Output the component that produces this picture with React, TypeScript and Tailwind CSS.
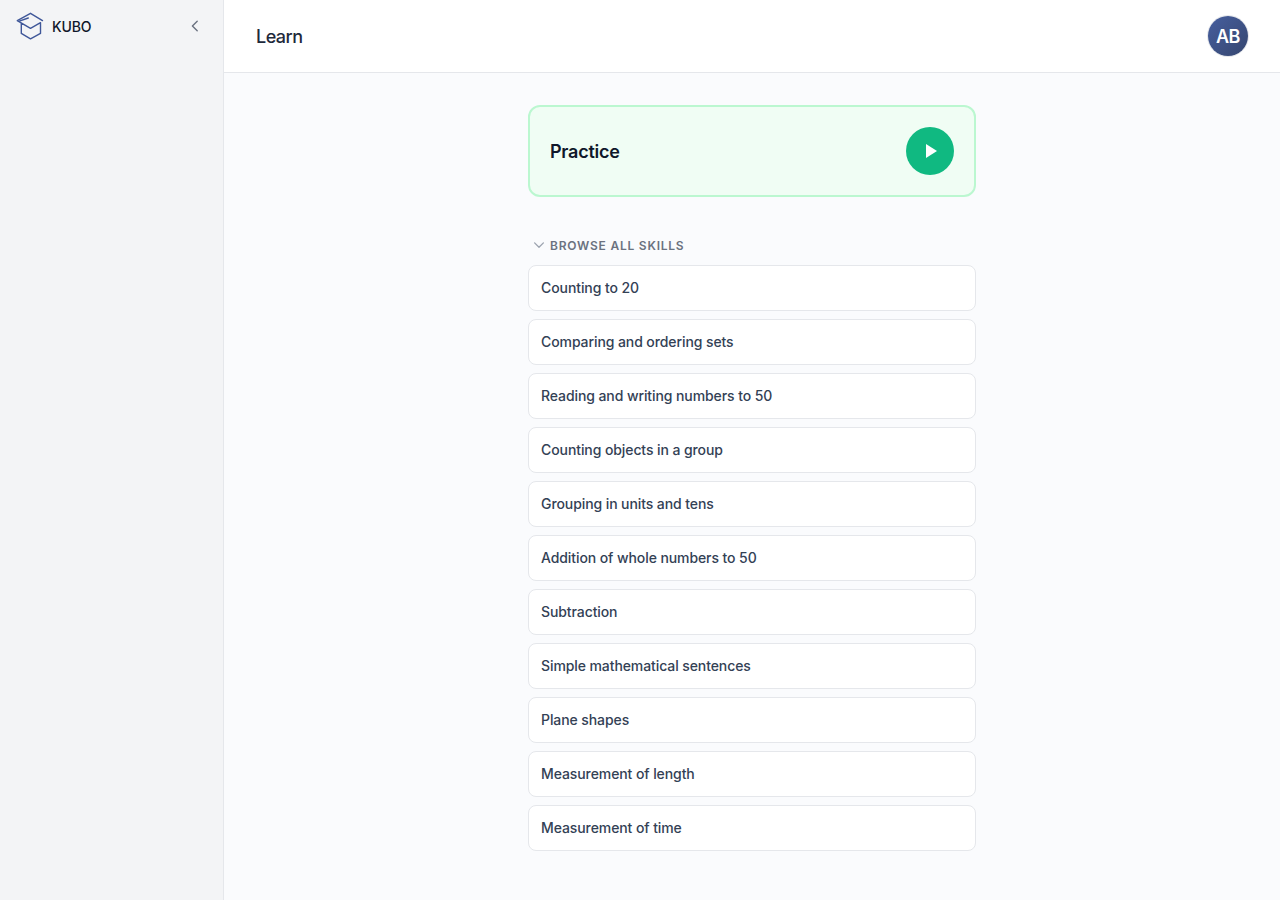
import React from 'react';

const skills = [
  'Counting to 20',
  'Comparing and ordering sets',
  'Reading and writing numbers to 50',
  'Counting objects in a group',
  'Grouping in units and tens',
  'Addition of whole numbers to 50',
  'Subtraction',
  'Simple mathematical sentences',
  'Plane shapes',
  'Measurement of length',
  'Measurement of time',
];

const KuboLogo: React.FC = () => (
  <svg
    className="w-7 h-7 text-[#3f5799]"
    viewBox="0 0 28 28"
    fill="none"
    stroke="currentColor"
    strokeWidth="1.4"
    strokeLinejoin="round"
    strokeLinecap="round"
  >
    <path d="M26.5 8.6 14.5 1.3 1.3 8.6 14.5 16.3 24.5 10.7V21.4L14.5 26.9 5.3 21.4V11" />
    <path d="M2.6 9.4 12.3 6" />
  </svg>
);

const Sidebar: React.FC = () => (
  <aside className="w-56 shrink-0 border-r border-gray-200 bg-[#f3f4f6]">
    <div className="flex h-[52px] items-center justify-between pl-4 pr-5">
      <div className="flex items-center gap-2">
        <KuboLogo />
        <span className="pt-px text-sm font-medium tracking-[-0.15px] text-[#0f172a]">KUBO</span>
      </div>
      <button aria-label="Collapse sidebar" className="text-[#6b7280]">
        <svg className="w-4 h-4" viewBox="0 0 16 16" fill="none" stroke="currentColor" strokeWidth="1.4" strokeLinecap="round" strokeLinejoin="round">
          <path d="M10.2 3.2 5.4 8l4.8 4.8" />
        </svg>
      </button>
    </div>
  </aside>
);

const Header: React.FC = () => (
  <header className="flex h-[73px] items-center justify-between border-b border-gray-200 bg-white px-8">
    <h1 className="pt-0.5 text-lg font-medium tracking-[-0.55px] text-[#1e293b]">Learn</h1>
    <div className="flex h-10 w-10 items-center justify-center rounded-full bg-gradient-to-br from-[#465f9f] to-[#36466f] pt-0.5 text-lg font-semibold tracking-[-0.5px] text-white ring-1 ring-gray-200">
      AB
    </div>
  </header>
);

export default function App() {
  return (
    <div className="flex h-[900px] overflow-hidden bg-[#fafbfd] font-['Inter',sans-serif] antialiased">
      <Sidebar />
      <div className="flex-1">
        <Header />
        <main className="mx-auto w-[448px] pt-8">
          {/* Practice card */}
          <div className="flex h-[92px] items-center justify-between rounded-xl border-2 border-[#bbf7d0] bg-[#f0fdf4] px-5">
            <h2 className="pt-0.5 text-lg font-semibold tracking-[-0.25px] text-[#0f172a]">Practice</h2>
            <button aria-label="Start practice" className="flex h-12 w-12 items-center justify-center rounded-full bg-[#10b981] text-white">
              <svg className="w-5 h-5" viewBox="0 0 20 20" fill="currentColor">
                <path d="M6 3v14l11-7z" />
              </svg>
            </button>
          </div>

          {/* Skills */}
          <div className="mt-10 flex h-4 items-center gap-1 pl-1">
            <svg className="w-3.5 h-3.5 text-[#9ca3af]" viewBox="0 0 14 14" fill="none" stroke="currentColor" strokeWidth="1.3" strokeLinecap="round" strokeLinejoin="round">
              <path d="M2.6 4.9 7 9.3l4.4-4.4" />
            </svg>
            <span className="pt-0.5 text-xs font-semibold tracking-[0.77px] text-[#6b7280]">BROWSE ALL SKILLS</span>
          </div>
          <ul className="mt-3 flex flex-col gap-2">
            {skills.map((skill) => (
              <li
                key={skill}
                className="flex h-[46px] items-center rounded-lg border border-gray-200 bg-white px-3 text-sm font-medium tracking-[-0.09px] text-[#334155]"
              >
                {skill}
              </li>
            ))}
          </ul>
        </main>
      </div>
    </div>
  );
}
